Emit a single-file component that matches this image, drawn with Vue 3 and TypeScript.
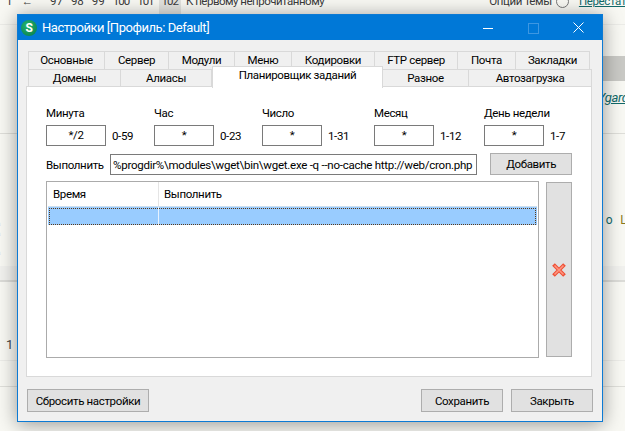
<script setup lang="ts">
// настройки вкладок и полей планировщика
const topTabs = [
  { title: 'Основные', width: 77 },
  { title: 'Сервер', width: 64 },
  { title: 'Модули', width: 66 },
  { title: 'Меню', width: 57 },
  { title: 'Кодировки', width: 83 },
  { title: 'FTP сервер', width: 83 },
  { title: 'Почта', width: 58 },
  { title: 'Закладки', width: 74 },
];
const bottomTabs = [
  { title: 'Домены', width: 93, active: false },
  { title: 'Алиасы', width: 91, active: false },
  { title: 'Планировщик заданий', width: 171, active: true },
  { title: 'Разное', width: 86, active: false },
  { title: 'Автозагрузка', width: 123, active: false },
];
const fields = [
  { label: 'Минута', value: '*/2', range: '0-59' },
  { label: 'Час', value: '*', range: '0-23' },
  { label: 'Число', value: '*', range: '1-31' },
  { label: 'Месяц', value: '*', range: '1-12' },
  { label: 'День недели', value: '*', range: '1-7' },
];
const command = '%progdir%\\modules\\wget\\bin\\wget.exe -q --no-cache http://web/cron.php';
</script>

<template>
  <div class="page">
    <!-- страница форума позади окна -->
    <div class="bg-top">
      <div class="pager">
        <span class="p-one">1</span>
        <span class="p-arrow">←</span>
        <span>97</span><span>98</span><span>99</span>
        <span class="num3">100</span><span class="num3">101</span>
        <span class="num3 p-current">102</span>
        <span class="p-first">К первому непрочитанному</span>
      </div>
      <div class="topic-tools">
        <span>Опции темы</span>
        <span class="circle"></span>
        <span class="stop">Перестать</span>
      </div>
    </div>
    <div class="bg-gray"></div>
    <div class="bg-link"><span>Ygarda</span></div>
    <div class="bg-post">
      <div class="bg-dots"><span>а</span><span>а</span><span class="bg-dot-last">а</span></div>
      <div class="bg-word"><span>o</span><span class="bg-l">Li</span></div>
    </div>
    <div class="bg-count"><span>1</span></div>
    <div class="bg-last"></div>

    <!-- окно настроек -->
    <div class="window">
      <div class="titlebar">
        <span class="app-icon">S</span>
        <span class="title">Настройки [Профиль: Default]</span>
        <div class="controls">
          <svg width="10" height="10" viewBox="0 0 10 10"><path d="M0 5.5H10" stroke="#fff" /></svg>
          <svg width="10" height="10" viewBox="0 0 10 10"><rect x=".5" y=".5" width="10" height="10" fill="none" stroke="#3d97e2" /></svg>
          <svg width="11" height="11" viewBox="0 0 11 11"><path d="M.5.5L10.5 10.5M10.5.5L.5 10.5" stroke="#fff" /></svg>
        </div>
      </div>

      <div class="body">
        <div class="tabs">
          <div class="tab-row top">
            <div v-for="tab in topTabs" :key="tab.title" class="tab" :style="{ width: tab.width + 'px' }">{{ tab.title }}</div>
          </div>
          <div class="tab-row">
            <div v-for="tab in bottomTabs" :key="tab.title" class="tab" :class="{ active: tab.active }" :style="{ width: tab.width + 'px' }">{{ tab.title }}</div>
          </div>
        </div>

        <div class="panel">
          <div class="fields">
            <div v-for="field in fields" :key="field.label" class="field">
              <label>{{ field.label }}</label>
              <div class="field-line">
                <input class="cron-input" :value="field.value" readonly />
                <span>{{ field.range }}</span>
              </div>
            </div>
          </div>

          <div class="command">
            <label>Выполнить</label>
            <input class="command-input" :value="command" readonly />
            <button class="btn add">Добавить</button>
          </div>

          <div class="list-area">
            <div class="list">
              <div class="list-head">
                <div class="col-time">Время</div>
                <div class="col-run">Выполнить</div>
              </div>
              <div class="list-row">
                <div class="col-time"></div>
                <div class="col-run"></div>
              </div>
            </div>
            <button class="btn remove" aria-label="Удалить">
              <svg width="16" height="16" viewBox="0 0 16 16">
                <path d="M2.5 2.5L13.5 13.5M13.5 2.5L2.5 13.5" stroke="#ee4f35" stroke-width="3.8" />
                <path d="M3.5 3.5L12.5 12.5M12.5 3.5L3.5 12.5" stroke="#ff9680" stroke-width="1.6" />
              </svg>
            </button>
          </div>
        </div>

        <div class="footer">
          <button class="btn reset">Сбросить настройки</button>
          <div class="footer-right">
            <button class="btn">Сохранить</button>
            <button class="btn">Закрыть</button>
          </div>
        </div>
      </div>
    </div>
  </div>
</template>

<style>
html, body {
  margin: 0;
  overflow: hidden;
}
</style>

<style scoped>
.page {
  position: relative;
  width: 625px;
  height: 431px;
  overflow: hidden;
  background: #f8f8f3;
  font-family: Roboto, "Noto Sans", sans-serif;
  font-size: 11.5px;
  letter-spacing: -0.35px;
  color: #000;
  display: flex;
  flex-direction: column;
}
.bg-top {
  flex: none;
  box-sizing: border-box;
  border-bottom: 1px solid #ecece8;
  display: flex;
  justify-content: space-between;
  color: #3a3a3a;
  line-height: 14px;
  margin-top: -6px;
  height: 31px;
}
.pager {
  display: flex;
  gap: 8px;
  padding-left: 6px;
  letter-spacing: 0;
}
.p-arrow {
  margin: 0 9px 0 1px;
}
.num3 {
  letter-spacing: -1px;
}
.p-current {
  background: #e2e2de;
  padding: 0 3px;
  margin: 0 -3px;
}
.p-first {
  letter-spacing: -0.5px;
}
.topic-tools {
  display: flex;
  gap: 4px;
  margin-right: -7px;
}
.circle {
  width: 11px;
  height: 11px;
  margin-top: 1px;
  border: 1px solid #777;
  border-radius: 50%;
}
.stop {
  margin-left: 6px;
  color: #116a6a;
  text-decoration: underline;
}
.bg-gray {
  align-self: flex-end;
  width: 60px;
  height: 25px;
  margin-top: 31px;
  background: #c9c9c5;
  flex: none;
}
.bg-link {
  height: 53px;
  flex: none;
  box-sizing: border-box;
  border-bottom: 1px solid #deded9;
  display: flex;
  justify-content: flex-end;
  padding-top: 9px;
  margin-right: -10px;
  color: #116a6a;
  font-style: italic;
  font-size: 13px;
  line-height: 16px;
  text-decoration: underline;
}
.bg-post {
  height: 148px;
  flex: none;
  box-sizing: border-box;
  border-bottom: 2px solid #dcdcd8;
  background: linear-gradient(#f8f8f3 132px, #f1f1ee 132px);
  display: flex;
  justify-content: space-between;
}
.bg-dots {
  display: flex;
  flex-direction: column;
  margin: 85px 0 0 -4px;
  font-size: 8px;
  line-height: 10px;
  color: #a8389a;
}
.bg-dot-last {
  margin-top: 9px;
}
.bg-word {
  display: flex;
  gap: 8px;
  margin: 78px -4px 0 0;
  font-size: 12px;
  line-height: 16px;
  color: #116a6a;
}
.bg-l {
  color: #8a7a1c;
}
.bg-count {
  height: 79px;
  flex: none;
  box-sizing: border-box;
  border-bottom: 1px solid #ecece8;
  padding: 55px 0 0 6px;
  color: #444;
  font-size: 13px;
  line-height: 16px;
}
.bg-last {
  height: 25px;
  flex: none;
  border-bottom: 1px solid #dfdfda;
}

.window {
  position: absolute;
  left: 17px;
  top: 14px;
  width: 586px;
  height: 408px;
  box-sizing: border-box;
  border: 1px solid #0c7ad4;
  background: #f0f0f0;
  box-shadow: 0 2px 18px rgba(0, 0, 0, 0.4);
  display: flex;
  flex-direction: column;
}
.titlebar {
  height: 25px;
  flex: none;
  background: #0078d7;
  color: #fff;
  display: flex;
  align-items: center;
  font-size: 13px;
  letter-spacing: -0.45px;
}
.app-icon {
  width: 16px;
  height: 16px;
  margin-left: 3px;
  border-radius: 50%;
  background: radial-gradient(circle at 40% 35%, #25b46f, #057a48);
  color: #fff;
  font-size: 12px;
  font-weight: 700;
  line-height: 16px;
  text-align: center;
}
.title {
  margin-left: 5px;
}
.controls {
  margin-left: auto;
  display: flex;
  align-items: center;
  gap: 35px;
  padding-right: 18px;
}
.controls svg {
  display: block;
  overflow: visible;
}
.body {
  flex: 1;
  display: flex;
  flex-direction: column;
  padding: 11px 10px 0 8px;
}
.tabs {
  padding-left: 2px;
  height: 35px;
  flex: none;
}
.tab-row {
  display: flex;
  height: 18px;
}
.tab {
  box-sizing: border-box;
  flex: none;
  height: 18px;
  background: #f0f0f0;
  border: 1px solid #d9d9d9;
  text-align: center;
  line-height: 16px;
  white-space: nowrap;
}
.tab + .tab {
  border-left: none;
}
.tab-row.top .tab {
  border-bottom: none;
}
.tab.active {
  position: relative;
  z-index: 1;
  height: 22px;
  margin-top: -3px;
  background: #fff;
  line-height: 17px;
  border-bottom: none;
  border-left: 1px solid #d9d9d9;
}
.panel {
  box-sizing: border-box;
  height: 291px;
  flex: none;
  background: #fff;
  border: 1px solid #d9d9d9;
  padding: 20px 19px 0;
}
.fields {
  display: grid;
  grid-template-columns: 108px 108px 112px 110px auto;
}
.field label {
  display: block;
  height: 14px;
  line-height: 14px;
  margin-top: -1px;
  margin-bottom: 5px;
}
.field-line {
  display: flex;
  align-items: center;
  gap: 6px;
}
input {
  box-sizing: border-box;
  font: inherit;
  letter-spacing: inherit;
  color: #000;
  border: 1px solid #7a7a7a;
  border-radius: 0;
  outline: none;
  background: #fff;
  margin: 0;
}
.cron-input {
  width: 60px;
  height: 21px;
  padding: 0 0 2px;
  text-align: center;
}
.command {
  display: flex;
  align-items: flex-end;
  margin-top: 7px;
}
.command label {
  width: 64px;
  flex: none;
  line-height: 20px;
}
.command-input {
  width: 369px;
  height: 21px;
  padding: 0 2px;
  letter-spacing: -0.25px;
}
.btn {
  box-sizing: border-box;
  width: 82px;
  height: 23px;
  padding: 0;
  font: inherit;
  letter-spacing: inherit;
  color: #000;
  background: #e1e1e1;
  border: 1px solid #adadad;
  border-radius: 0;
}
.add {
  height: 22px;
  margin-left: 13px;
}
.list-area {
  display: flex;
  align-items: flex-start;
  gap: 7px;
  margin-top: 6px;
}
.list {
  box-sizing: border-box;
  width: 494px;
  height: 177px;
  padding: 0 1px;
  border: 1px solid #ababab;
  background: #fff;
}
.list-head {
  display: flex;
  height: 24px;
  line-height: 24px;
}
.col-time {
  width: 111px;
  box-sizing: border-box;
  flex: none;
  padding-left: 5px;
  border-right: 1px solid #e5e5e5;
}
.col-run {
  flex: 1;
  padding-left: 5px;
}
.list-row {
  position: relative;
  display: flex;
  height: 18px;
  background: #99ccff;
  border-top: 1px solid #cfe0ef;
}
.list-row .col-time {
  border-right-color: #e6f2ff;
}
.list-row::after {
  content: "";
  position: absolute;
  inset: 1px 1px 0 1px;
  border: 1px dotted #5a3a1a;
}
.remove {
  width: 26px;
  height: 175px;
  display: flex;
  align-items: center;
  justify-content: center;
  margin-top: 1px;
}
.remove svg {
  display: block;
}
.footer {
  display: flex;
  justify-content: space-between;
  padding: 12px 0 0 1px;
}
.footer-right {
  display: flex;
  gap: 8px;
  margin-right: -1px;
}
.reset {
  width: 122px;
}
</style>
